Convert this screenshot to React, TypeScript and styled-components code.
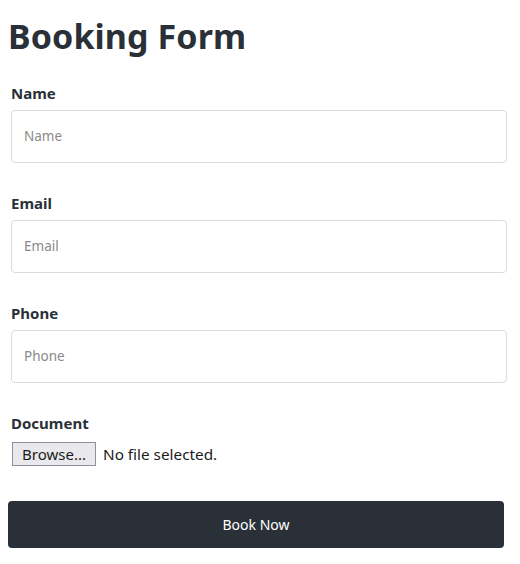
import React from "react";
import styled, { createGlobalStyle } from "styled-components";

const GlobalStyle = createGlobalStyle`
  body {
    margin: 8px;
    background: #ffffff;
    font-family: "Noto Sans", "Open Sans", sans-serif;
    color: #2a3037;
  }
  * {
    box-sizing: border-box;
  }
`;

const Title = styled.h1`
  margin: 8px 0 25px;
  font-size: 34px;
  font-weight: 700;
  line-height: 1.2;
  letter-spacing: 0.1px;
  color: #2a3037;
`;

const Form = styled.form`
  display: flex;
  flex-direction: column;
`;

const Field = styled.div`
  display: flex;
  flex-direction: column;
  gap: 6px;
  margin: 0 0 29px 3px;
`;

const Label = styled.label`
  font-size: 15px;
  font-weight: 700;
  line-height: 22px;
  color: #2a3037;
`;

const Input = styled.input`
  width: 496px;
  height: 53px;
  padding: 0 12px;
  border: 1px solid #dcdcdc;
  border-radius: 4px;
  font-family: inherit;
  font-size: 13.5px;
  color: #2a3037;

  &::placeholder {
    color: #8a8a8a;
  }
`;

const FileRow = styled.div`
  display: flex;
  align-items: center;
  gap: 7px;
  margin: 2px 0 0 1px;
`;

const BrowseButton = styled.button`
  height: 24px;
  width: 84px;
  padding: 0;
  background: #e9e9ed;
  border: 1px solid #8f8f9d;
  border-radius: 0;
  font-family: inherit;
  font-size: 15px;
  line-height: 22px;
  color: #1b1b1b;
  cursor: pointer;
`;

const FileName = styled.span`
  font-size: 15.3px;
  color: #1b1b1b;
`;

const Submit = styled.button`
  width: 496px;
  height: 47px;
  margin-top: 6px;
  border: none;
  border-radius: 4px;
  background: #2a3037;
  color: #ffffff;
  font-family: inherit;
  font-size: 14px;
  cursor: pointer;
`;

function App() {
  return (
    <>
      <GlobalStyle />
      <Title>Booking Form</Title>
      <Form onSubmit={(e) => e.preventDefault()}>
        <Field>
          <Label>Name</Label>
          <Input type="text" placeholder="Name" />
        </Field>
        <Field>
          <Label>Email</Label>
          <Input type="email" placeholder="Email" />
        </Field>
        <Field>
          <Label>Phone</Label>
          <Input type="tel" placeholder="Phone" />
        </Field>
        <Field>
          <Label>Document</Label>
          <FileRow>
            <BrowseButton type="button">Browse...</BrowseButton>
            <FileName>No file selected.</FileName>
          </FileRow>
        </Field>
        <Submit type="submit">Book Now</Submit>
      </Form>
    </>
  );
}

export default App;
